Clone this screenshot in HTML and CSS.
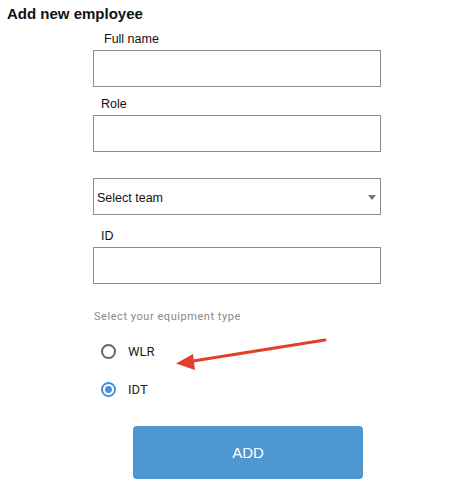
FILE: index.html
```html
<!DOCTYPE html>
<html>
<head>
<meta charset="utf-8">
<link rel="stylesheet" href="styles.css">
</head>
<body>
<h1 class="title">Add new employee</h1>
<form class="form">
  <div class="field field-first">
    <label class="label label-full">Full name</label>
    <div class="input"></div>
  </div>
  <div class="field field-role">
    <label class="label">Role</label>
    <div class="input"></div>
  </div>
  <div class="field">
    <label class="label">&nbsp;</label>
    <div class="input select"><span class="select-text">Select team</span><span class="caret"></span></div>
  </div>
  <div class="field field-id">
    <label class="label label-id">ID</label>
    <div class="input"></div>
  </div>
  <div class="group">
    <div class="group-label">Select your equipment type</div>
    <div class="radio-row"><span class="radio"></span><span class="radio-text">WLR</span></div>
    <div class="radio-row"><span class="radio radio-on"></span><span class="radio-text">IDT</span></div>
  </div>
  <div class="actions"><button type="button" class="btn">ADD</button></div>
</form>
<svg class="annot" width="463" height="500" viewBox="0 0 463 500">
  <line x1="325" y1="340" x2="190" y2="361.5" stroke="#e43f2b" stroke-width="3" stroke-linecap="round"/>
  <polygon points="176,363.5 193,354 195,370" fill="#e43f2b"/>
</svg>
</body>
</html>
```
FILE: styles.css
```css
html, body { margin: 0; padding: 0; background: #fff; }
body {
  position: relative;
  width: 463px;
  height: 500px;
  overflow: hidden;
  font-family: "Liberation Sans", Arial, sans-serif;
  color: #111;
}
.title {
  margin: 0;
  padding: 5px 0 0 7px;
  font-size: 15px;
  line-height: 17px;
  font-weight: bold;
  color: #111;
}
.form {
  margin-left: 93px;
  width: 288px;
}
.field { margin-top: 8px; }
.field-first { margin-top: 10px; }
.field-role { margin-top: 10px; }
.field-id { margin-top: 14px; }
.label {
  display: block;
  font-size: 12.5px;
  line-height: 15px;
  height: 15px;
  padding-left: 8px;
  margin-bottom: 3px;
  color: #111;
}
.label-full { padding-left: 11px; }
.label-id { padding-left: 8px; }
.input {
  box-sizing: border-box;
  height: 37px;
  border: 1px solid #8c8c8c;
  background: #fff;
}
.select {
  display: flex;
  align-items: center;
  justify-content: space-between;
  padding: 2px 4px 0 3px;
}
.select-text { font-size: 12.5px; color: #111; }
.caret {
  width: 0;
  height: 0;
  border-left: 4.5px solid transparent;
  border-right: 4.5px solid transparent;
  border-top: 5px solid #777;
}
.group { margin-top: 26px; }
.group-label {
  font-family: Roboto, "Liberation Sans", sans-serif;
  font-size: 11px;
  line-height: 14px;
  letter-spacing: 0.55px;
  color: #8a8a8a;
  padding-left: 1px;
}
.radio-row {
  display: flex;
  align-items: center;
  height: 38px;
  padding-left: 8px;
}
.group-label + .radio-row { margin-top: 8px; }
.radio {
  box-sizing: border-box;
  width: 15px;
  height: 15px;
  border-radius: 50%;
  border: 2px solid #666;
  margin-right: 12px;
  position: relative;
}
.radio-on { border-color: #4a90d9; }
.radio-on::after {
  content: "";
  position: absolute;
  left: 2px;
  top: 2px;
  width: 7px;
  height: 7px;
  border-radius: 50%;
  background: #4a90d9;
}
.radio-text {
  font-family: Roboto, "Liberation Sans", sans-serif;
  font-size: 13px;
  color: #222;
}
.actions {
  margin-top: 18px;
  padding-left: 40px;
}
.btn {
  width: 230px;
  height: 53px;
  border: 0;
  border-radius: 4px;
  background: #4f97d1;
  color: #fff;
  font-family: "Liberation Sans", Arial, sans-serif;
  font-size: 15px;
  cursor: pointer;
}
.annot {
  position: absolute;
  left: 0;
  top: 0;
  pointer-events: none;
}
```
